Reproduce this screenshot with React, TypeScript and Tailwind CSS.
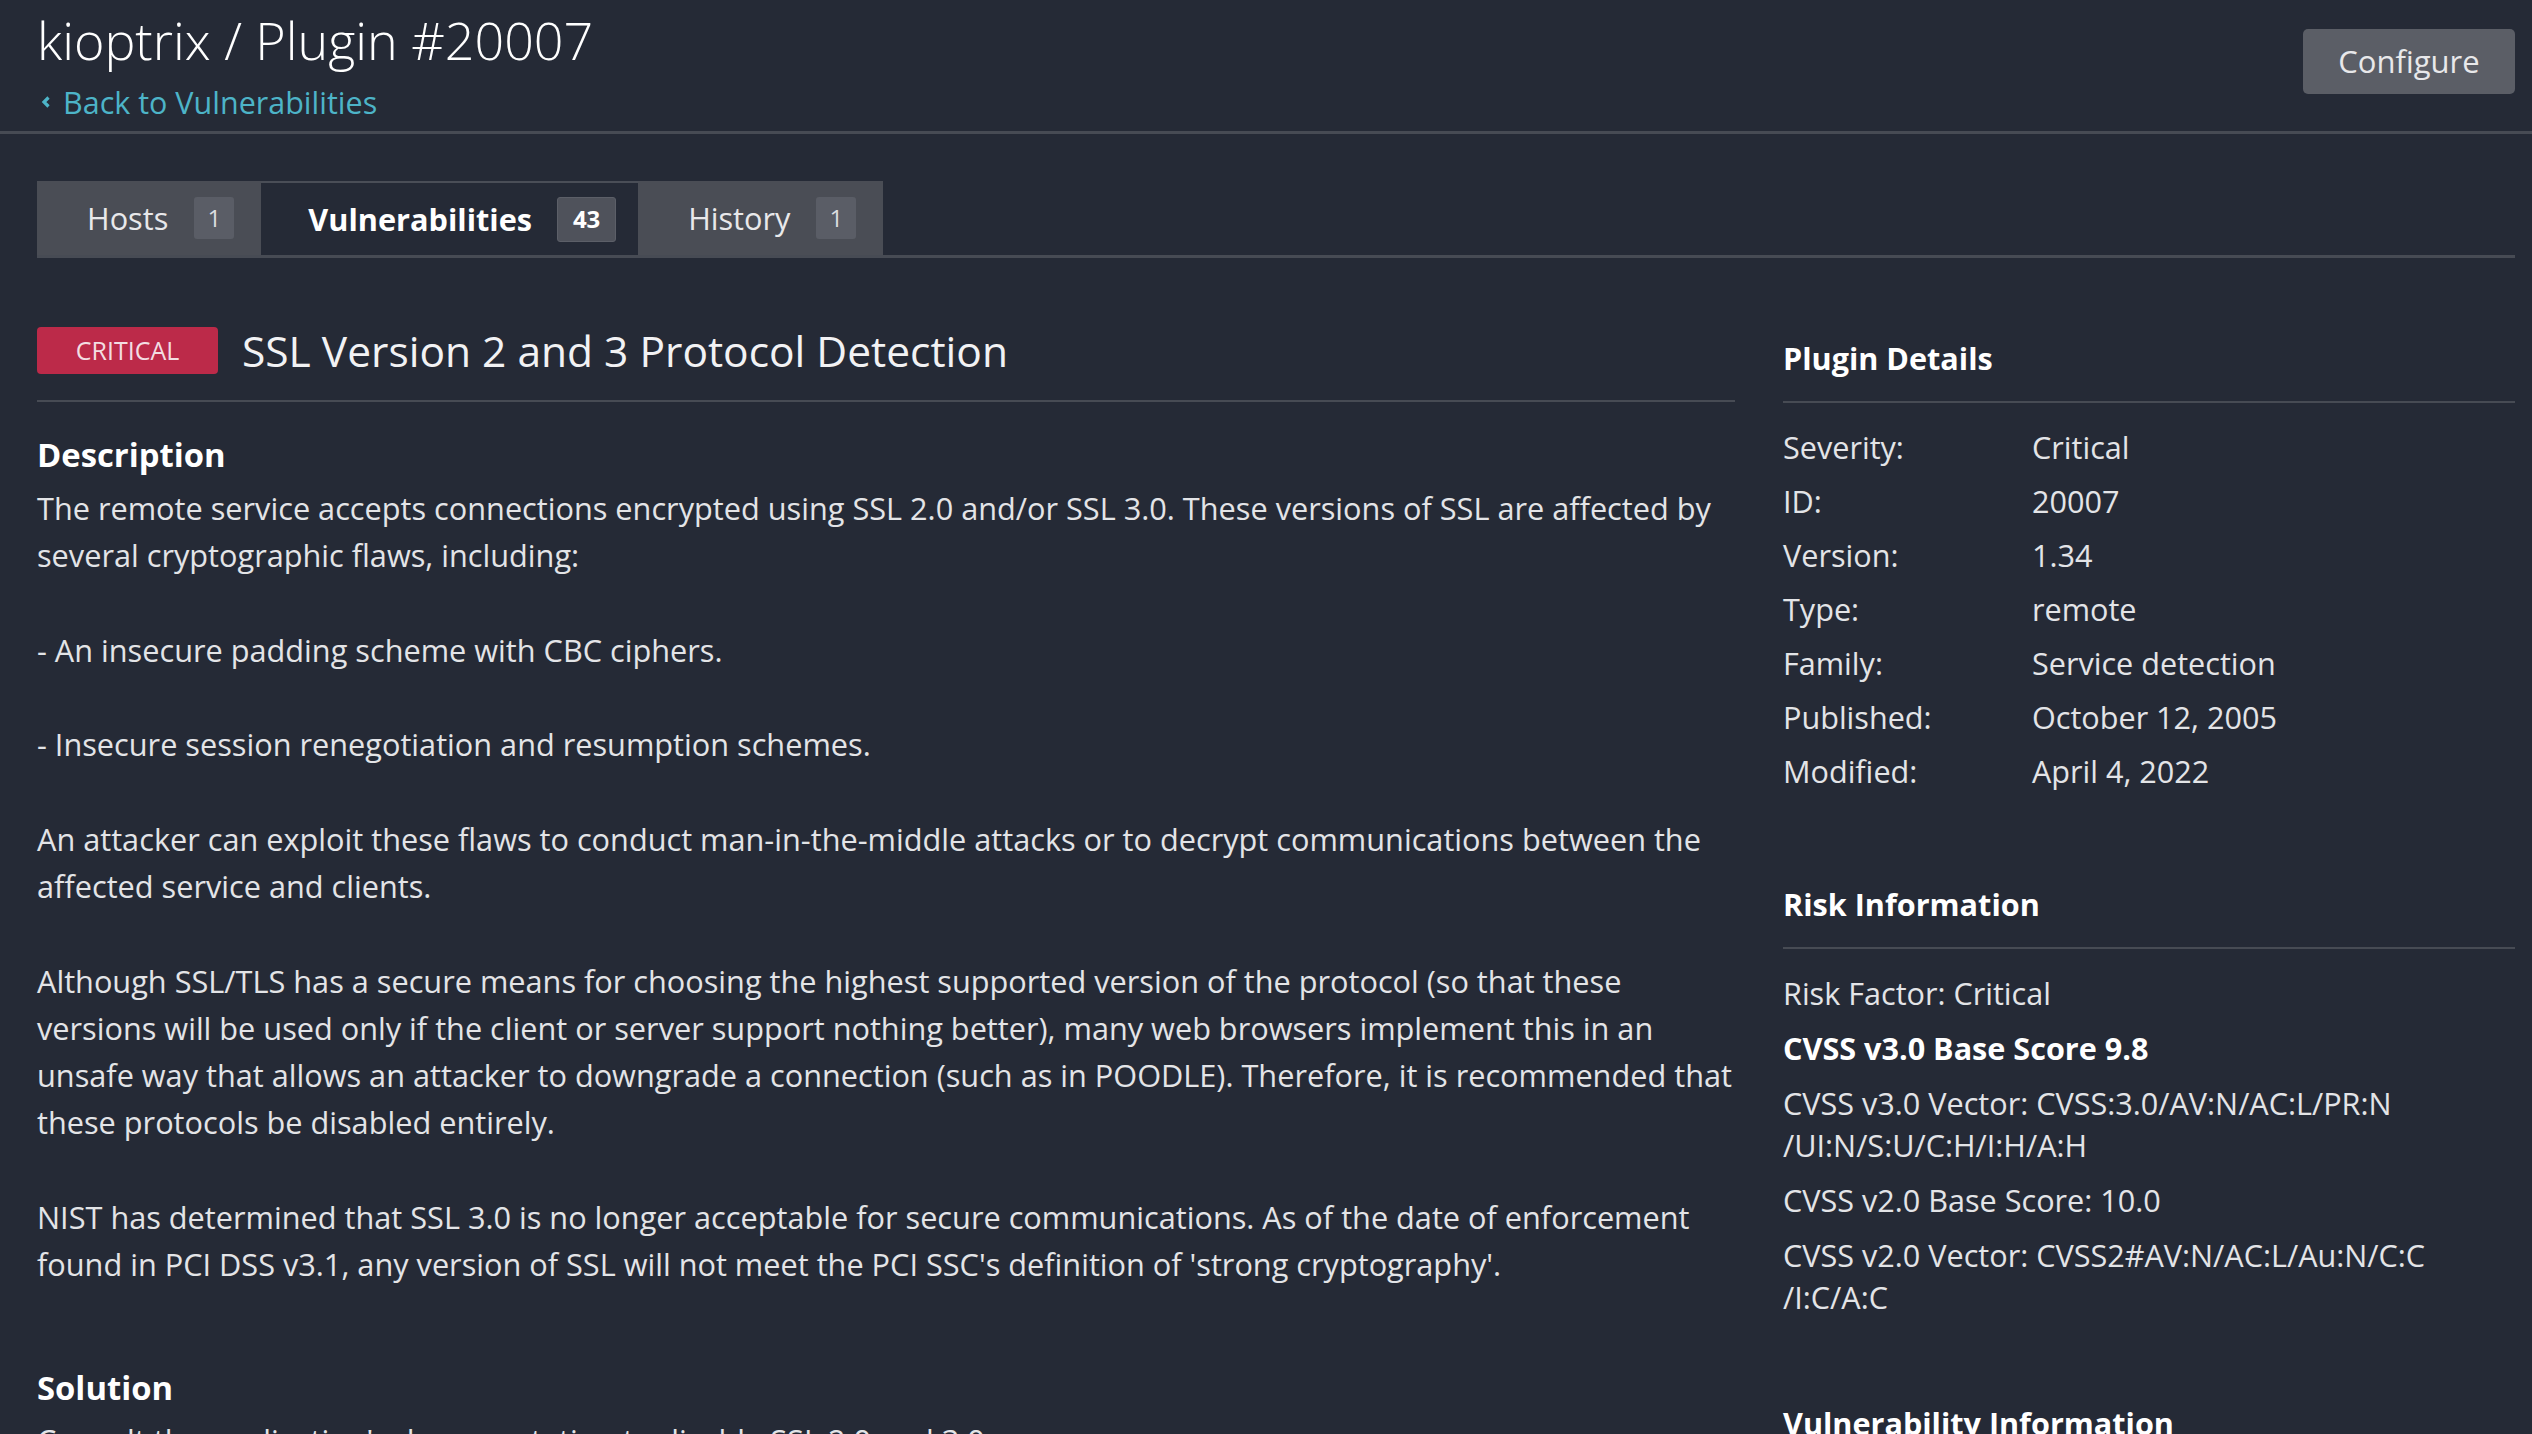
import React from "react";

const description = `The remote service accepts connections encrypted using SSL 2.0 and/or SSL 3.0. These versions of SSL are affected by several cryptographic flaws, including:

- An insecure padding scheme with CBC ciphers.

- Insecure session renegotiation and resumption schemes.

An attacker can exploit these flaws to conduct man-in-the-middle attacks or to decrypt communications between the affected service and clients.

Although SSL/TLS has a secure means for choosing the highest supported version of the protocol (so that these versions will be used only if the client or server support nothing better), many web browsers implement this in an unsafe way that allows an attacker to downgrade a connection (such as in POODLE). Therefore, it is recommended that these protocols be disabled entirely.

NIST has determined that SSL 3.0 is no longer acceptable for secure communications. As of the date of enforcement found in PCI DSS v3.1, any version of SSL will not meet the PCI SSC's definition of 'strong cryptography'.`;

const pluginDetails: [string, string][] = [
  ["Severity:", "Critical"],
  ["ID:", "20007"],
  ["Version:", "1.34"],
  ["Type:", "remote"],
  ["Family:", "Service detection"],
  ["Published:", "October 12, 2005"],
  ["Modified:", "April 4, 2022"],
];

function Tab({ label, count, active }: { label: string; count: string; active?: boolean }) {
  return (
    <div
      className={
        active
          ? "flex items-center h-[74px] pl-[47px] pr-[22px] bg-[#252a36] border-t-2 border-[#4a4e57] -mb-[3px] text-white font-bold"
          : "flex items-center h-[74px] pl-[50px] pr-[27px] bg-[#4a4d55] text-[#e8e8ea]"
      }
    >
      <span className="text-[30.7px] leading-none">{label}</span>
      <span
        className={
          active
            ? "ml-[25px] flex items-center justify-center w-[59px] h-[45px] rounded-[3px] bg-[#4f525b] border border-[#5c5f68] text-[24px] text-white"
            : "ml-[26px] flex items-center justify-center w-[40px] h-[42px] rounded-[3px] bg-[#5a5d66] text-[24px] font-normal text-[#dcdde0]"
        }
      >
        {count}
      </span>
    </div>
  );
}

function SideHeading({ children }: { children: React.ReactNode }) {
  return (
    <h3 className="text-[30.6px] leading-[47px] font-bold text-white pb-[19px] border-b-2 border-[#474b54]">
      {children}
    </h3>
  );
}

export default function App() {
  return (
    <div className="h-[1434px] overflow-hidden bg-[#252a36] text-[#e3e4e7] font-['Open_Sans','Liberation_Sans',sans-serif]">
      {/* Header */}
      <div className="flex justify-between items-start pl-[37px] pr-[17px] pt-[9px] pb-[9px] border-b-[3px] border-[#474b54]">
        <div>
          <h1 className="text-[52px] leading-[62px] font-light text-white">kioptrix / Plugin #20007</h1>
          <a className="mt-[11px] flex items-center gap-[12px] text-[30.5px] leading-[40px] text-[#4db4c8]">
            <svg width="10" height="14" viewBox="0 0 10 14" className="ml-[4px]">
              <path d="M7.5 2.5 L3 7 L7.5 11.5" fill="none" stroke="#4db4c8" strokeWidth="3.2" />
            </svg>
            Back to Vulnerabilities
          </a>
        </div>
        <button className="mt-[20px] w-[212px] h-[65px] rounded-[5px] bg-[#5b5e66] text-[31px] text-[#e8e8ea]">
          Configure
        </button>
      </div>

      <div className="pl-[37px] pr-[17px]">
        {/* Tabs */}
        <div className="mt-[47px] flex border-b-[3px] border-[#474b54]">
          <Tab label="Hosts" count="1" />
          <Tab label="Vulnerabilities" count="43" active />
          <Tab label="History" count="1" />
        </div>

        <div className="mt-[69px] flex gap-[48px]">
          {/* Main column */}
          <div className="w-[1698px] shrink-0">
            <div className="flex items-center gap-[24px] pb-[26px] border-b-2 border-[#474b54]">
              <span className="w-[181px] h-[47px] flex items-center justify-center rounded-[4px] bg-[#bc2a49] text-[25px] text-[#f3dde2] uppercase">
                Critical
              </span>
              <h2 className="text-[42.5px] leading-[47px] text-[#f2f2f4]">SSL Version 2 and 3 Protocol Detection</h2>
            </div>

            <h3 className="mt-[29px] text-[32.8px] leading-[47px] font-bold text-white">Description</h3>
            <p className="mt-[7px] text-[30.7px] leading-[47.25px] whitespace-pre-line">{description}</p>

            <h3 className="mt-[76px] text-[32.8px] leading-[47px] font-bold text-white">Solution</h3>
            <p className="mt-[6px] text-[30.7px] leading-[47.25px]">
              Consult the application's documentation to disable SSL 2.0 and 3.0.
            </p>
          </div>

          {/* Side column */}
          <div className="flex-1 pt-[8px]">
            <SideHeading>Plugin Details</SideHeading>
            <div className="mt-[18px] text-[30.6px]">
              {pluginDetails.map(([k, v]) => (
                <div key={k} className="flex h-[54px] items-center">
                  <span className="w-[249px] shrink-0">{k}</span>
                  <span>{v}</span>
                </div>
              ))}
            </div>

            <div className="mt-[82px]">
              <SideHeading>Risk Information</SideHeading>
              <div className="pt-[10px] text-[30.6px] leading-[42px] flex flex-col gap-[13px]">
                <p className="mt-[13px]">Risk Factor: Critical</p>
                <p className="font-bold text-white">CVSS v3.0 Base Score 9.8</p>
                <p>
                  CVSS v3.0 Vector: CVSS:3.0/AV:N/AC:L/PR:N
                  <br />
                  /UI:N/S:U/C:H/I:H/A:H
                </p>
                <p>CVSS v2.0 Base Score: 10.0</p>
                <p>
                  CVSS v2.0 Vector: CVSS2#AV:N/AC:L/Au:N/C:C
                  <br />
                  /I:C/A:C
                </p>
              </div>
            </div>

            <div className="mt-[82px]">
              <SideHeading>Vulnerability Information</SideHeading>
            </div>
          </div>
        </div>
      </div>
    </div>
  );
}
